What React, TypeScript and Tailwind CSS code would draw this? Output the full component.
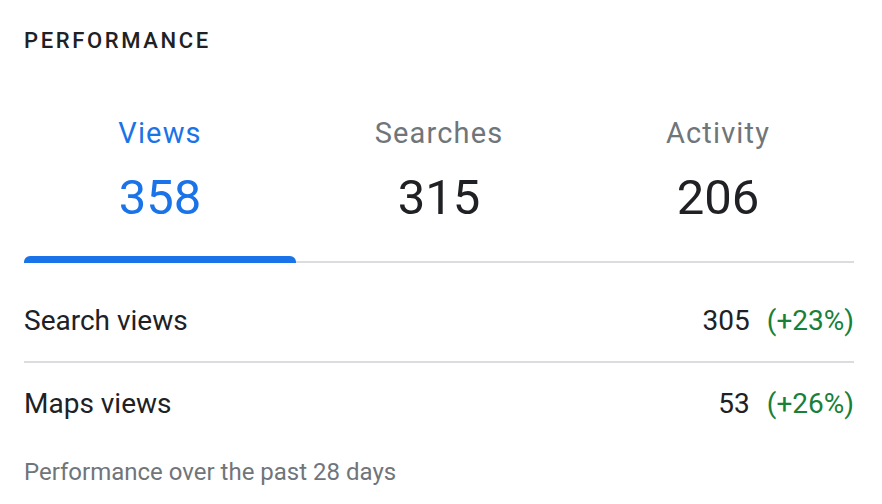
import React from "react";

const tabs = [
  { label: "Views", value: "358", active: true },
  { label: "Searches", value: "315", active: false },
  { label: "Activity", value: "206", active: false },
];

const rows = [
  { label: "Search views", value: "305", change: "(+23%)" },
  { label: "Maps views", value: "53", change: "(+26%)" },
];

export default function App() {
  return (
    <div
      className="w-[882px] h-[504px] bg-white pl-[24px] pr-[28px] overflow-hidden"
      style={{ fontFamily: "Roboto, 'Liberation Sans', sans-serif" }}
    >
      <div className="pt-[27px] text-[22px] leading-[28px] font-medium tracking-[0.12em] text-[#202124]">
        PERFORMANCE
      </div>
      <div className="mt-[61px] flex gap-[7px] border-b-2 border-[#dadce0]">
        {tabs.map((t) => (
          <div key={t.label} className="flex-1 flex flex-col items-center">
            <div
              className={`text-[29px] leading-[34px] tracking-[0.04em] ${
                t.active ? "text-[#1a73e8]" : "text-[#70757a]"
              }`}
            >
              {t.label}
            </div>
            <div
              className={`mt-[20px] text-[49px] leading-[56px] ${
                t.active ? "text-[#1a73e8]" : "text-[#202124]"
              }`}
            >
              {t.value}
            </div>
            <div
              className={`mt-[30px] w-full h-[7px] -mb-[2px] rounded-t-[6px] ${
                t.active ? "bg-[#1a73e8]" : "bg-transparent"
              }`}
            />
          </div>
        ))}
      </div>
      <div className="mt-[18px]">
        {rows.map((r, i) => (
          <div
            key={r.label}
            className={`h-[82px] flex items-center justify-between text-[28px] text-[#202124] ${
              i === 0 ? "border-b-2 border-[#dadce0]" : ""
            }`}
          >
            <span>{r.label}</span>
            <span className="flex gap-[17px]">
              <span>{r.value}</span>
              <span className="text-[#188038]">{r.change}</span>
            </span>
          </div>
        ))}
      </div>
      <div className="mt-[12px] text-[24px] leading-[30px] text-[#70757a]">
        Performance over the past 28 days
      </div>
    </div>
  );
}
